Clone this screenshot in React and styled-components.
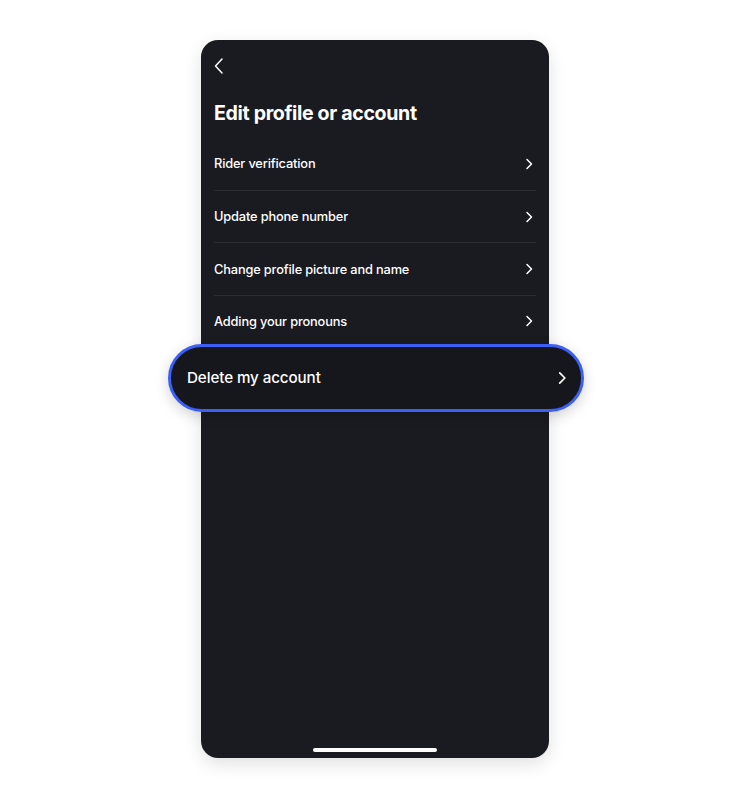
import React from 'react';
import styled, { createGlobalStyle } from 'styled-components';

const GlobalStyle = createGlobalStyle`
  html, body {
    margin: 0;
    padding: 0;
    background: #ffffff;
  }
  body {
    font-family: "Inter", "Lato", sans-serif;
  }
`;

const Page = styled.div`
  width: 750px;
  height: 799px;
  display: flex;
  justify-content: center;
  padding-top: 40px;
  box-sizing: border-box;
`;

const Phone = styled.div`
  width: 348px;
  height: 718px;
  background: #1a1a21;
  border-radius: 17px;
  box-shadow: 0 6px 18px rgba(0, 0, 0, 0.12);
  display: flex;
  flex-direction: column;
  padding: 0 13px;
  box-sizing: border-box;
  color: #ffffff;
`;

const TopBar = styled.div`
  height: 52px;
  display: flex;
  align-items: center;
`;

const BackButton = styled.button`
  background: none;
  border: 0;
  padding: 0;
  margin-left: -1px;
  display: flex;
  color: #ffffff;
`;

const Title = styled.h1`
  margin: 8px 0 12px 0;
  font-size: 19.6px;
  font-weight: 700;
  letter-spacing: -0.35px;
  line-height: 26px;
`;

const List = styled.div`
  display: flex;
  flex-direction: column;
  flex: 1;
`;

const Row = styled.div`
  height: ${p => (p.$last ? '47.5px' : '52.7px')};
  display: flex;
  align-items: ${p => (p.$last ? 'flex-start' : 'center')};
  padding-top: ${p => (p.$last ? '18px' : '0')};
  justify-content: space-between;
  box-sizing: border-box;
  border-bottom: ${p => (p.$last ? 'none' : '1px solid #2c2c33')};
  font-size: 12.8px;
  font-weight: 500;
  letter-spacing: -0.15px;
`;

const Highlight = styled.div`
  height: 68px;
  margin: 0 -48px 0 -46px;
  border: 3px solid #3c5ff5;
  border-radius: 34px;
  background: #16161d;
  box-shadow: 0 4px 14px rgba(0, 0, 0, 0.18);
  box-sizing: border-box;
  display: flex;
  align-items: center;
  justify-content: space-between;
  padding: 0 11px 0 16px;
  font-size: 15.2px;
  font-weight: 500;
  letter-spacing: -0.1px;
`;

const Spacer = styled.div`
  flex: 1;
`;

const HomeBar = styled.div`
  align-self: center;
  width: 124px;
  height: 4px;
  border-radius: 2px;
  background: #ffffff;
  margin-bottom: 6px;
`;

const Chevron = ({ size = 14 }) => (
  <svg width={size} height={size} viewBox="0 0 14 14" fill="none">
    <path d="M5 2.5 L9.5 7 L5 11.5" stroke="#fff" strokeWidth="1.5" strokeLinecap="round" strokeLinejoin="round" />
  </svg>
);

const items = [
  'Rider verification',
  'Update phone number',
  'Change profile picture and name',
  'Adding your pronouns',
];

export default function App() {
  return (
    <>
      <GlobalStyle />
      <Page>
        <Phone>
          <TopBar>
            <BackButton aria-label="Back">
              <svg width="12" height="18" viewBox="0 0 12 18" fill="none">
                <path d="M9 2 L2.5 9 L9 16" stroke="#fff" strokeWidth="1.5" strokeLinecap="round" strokeLinejoin="round" />
              </svg>
            </BackButton>
          </TopBar>
          <Title>Edit profile or account</Title>
          <List>
            {items.map((label, i) => (
              <Row key={label} $last={i === items.length - 1}>
                <span>{label}</span>
                <Chevron />
              </Row>
            ))}
            <Highlight>
              <span>Delete my account</span>
              <Chevron size={16} />
            </Highlight>
            <Spacer />
            <HomeBar />
          </List>
        </Phone>
      </Page>
    </>
  );
}
